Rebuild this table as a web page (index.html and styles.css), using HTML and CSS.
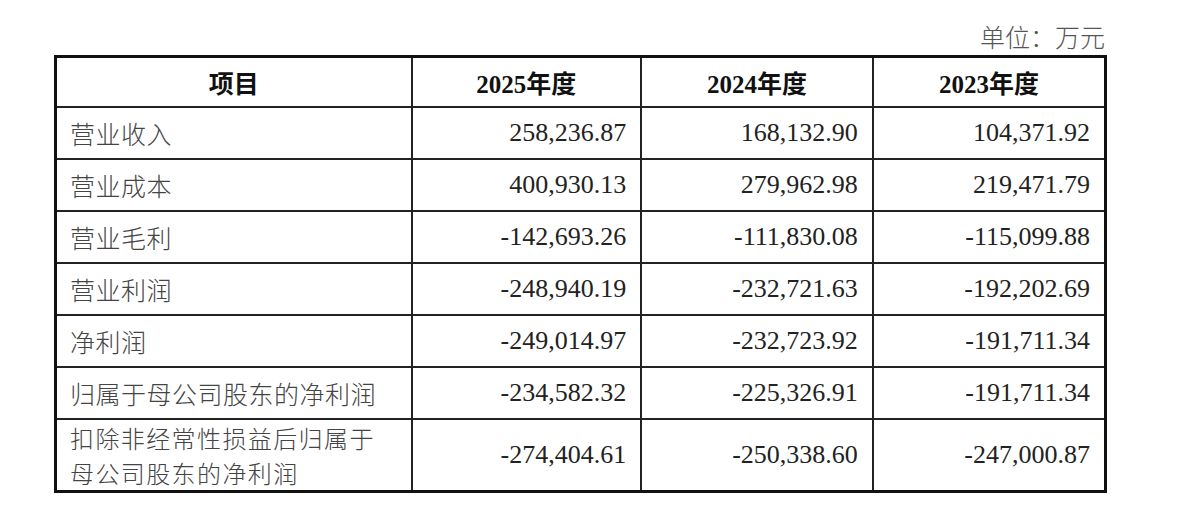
FILE: index.html
```html
<!DOCTYPE html>
<html lang="zh">
<head>
<meta charset="utf-8">
<link rel="stylesheet" href="styles.css">
</head>
<body>
<div class="page">
  <div class="unit">单位：万元</div>
  <table class="fin">
    <colgroup>
      <col class="c1"><col class="c2"><col class="c3"><col class="c4">
    </colgroup>
    <thead>
      <tr><th>项目</th><th>2025年度</th><th>2024年度</th><th>2023年度</th></tr>
    </thead>
    <tbody>
      <tr><td class="name">营业收入</td><td>258,236.87</td><td>168,132.90</td><td>104,371.92</td></tr>
      <tr><td class="name">营业成本</td><td>400,930.13</td><td>279,962.98</td><td>219,471.79</td></tr>
      <tr><td class="name">营业毛利</td><td>-142,693.26</td><td>-111,830.08</td><td>-115,099.88</td></tr>
      <tr><td class="name">营业利润</td><td>-248,940.19</td><td>-232,721.63</td><td>-192,202.69</td></tr>
      <tr><td class="name">净利润</td><td>-249,014.97</td><td>-232,723.92</td><td>-191,711.34</td></tr>
      <tr><td class="name">归属于母公司股东的净利润</td><td>-234,582.32</td><td>-225,326.91</td><td>-191,711.34</td></tr>
      <tr class="tall"><td class="name"><span class="ln">扣除非经常性损益后归属于</span><span class="ln">母公司股东的净利润</span></td><td>-274,404.61</td><td>-250,338.60</td><td>-247,000.87</td></tr>
    </tbody>
  </table>
</div>
</body>
</html>
```

FILE: styles.css
```css
html, body {
  margin: 0;
  padding: 0;
  background: #fff;
}
.page {
  width: 1053px;
  margin-left: 54px;
  padding-top: 21px;
}
.unit {
  text-align: right;
  font-family: "Noto Sans CJK SC", sans-serif;
  font-size: 25px;
  font-weight: 300;
  line-height: 30px;
  color: #555;
  margin-right: 2px;
  height: 34px;
}
.fin {
  width: 1053px;
  table-layout: fixed;
  border-collapse: collapse;
  border: 3px solid #111;
  color: #222;
}
.c1 { width: 355px; }
.c2 { width: 229px; }
.c3 { width: 231px; }
.c4 { width: 232px; }
.fin th, .fin td {
  border: 2px solid #222;
  padding: 0 14px;
  vertical-align: middle;
}
.fin th {
  height: 48px;
  font-family: "Liberation Serif", "Noto Sans CJK SC", serif;
  font-weight: bold;
  font-size: 25px;
  text-align: center;
  color: #111;
}
.fin td {
  height: 50px;
  font-family: "Liberation Serif", serif;
  font-size: 26px;
  text-align: right;
  color: #222;
}
.fin td.name {
  font-family: "Noto Sans CJK SC", sans-serif;
  font-size: 25px;
  letter-spacing: 0.5px;
  font-weight: 300;
  text-align: left;
  color: #444;
  padding-left: 13px;
  padding-right: 4px;
  line-height: 32px;
  white-space: nowrap;
}
.fin tr.tall td {
  height: 69px;
}
.fin tr.tall td.name {
  font-size: 24px;
  letter-spacing: 1.4px;
  line-height: 35px;
}
.ln {
  display: block;
}
```
